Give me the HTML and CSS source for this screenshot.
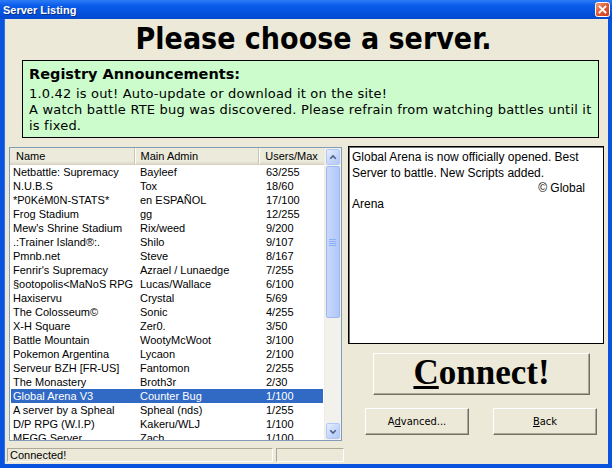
FILE: index.html
```html
<!DOCTYPE html>
<html>
<head>
<meta charset="utf-8">
<link rel="stylesheet" href="styles.css">
</head>
<body>
<div class="window">
  <div class="titlebar">
    <span class="title">Server Listing</span>
    <svg class="close" width="15" height="15" viewBox="0 0 15 15">
      <defs>
        <linearGradient id="cg" x1="0" y1="0" x2="1" y2="1">
          <stop offset="0" stop-color="#F0A080"/>
          <stop offset="0.5" stop-color="#DE5A32"/>
          <stop offset="1" stop-color="#C8401E"/>
        </linearGradient>
      </defs>
      <rect x="0.5" y="0.5" width="14" height="14" rx="2" fill="url(#cg)" stroke="#fff"/>
      <path d="M4.5 4.5 L10.5 10.5 M10.5 4.5 L4.5 10.5" stroke="#fff" stroke-width="1.8" stroke-linecap="square"/>
    </svg>
  </div>
  <div class="client">
    <h1 class="heading">Please choose a server.</h1>
    <div class="announce">
      <div class="announce-title">Registry Announcements:</div>
      <div class="announce-line">1.0.42 is out! Auto-update or download it on the site!</div>
      <div class="announce-line">A watch battle RTE bug was discovered. Please refrain from watching battles until it</div>
      <div class="announce-line">is fixed.</div>
    </div>
    <div class="main">
      <div class="listview">
        <div class="list-body">
          <div class="list-header">
            <div class="hcell c1">Name</div>
            <div class="hcell c2">Main Admin</div>
            <div class="hcell c3">Users/Max</div>
          </div>
          <div class="rows">
            <div class="row"><span class="c1">Netbattle: Supremacy</span><span class="c2">Bayleef</span><span class="c3">63/255</span></div>
            <div class="row"><span class="c1">N.U.B.S</span><span class="c2">Tox</span><span class="c3">18/60</span></div>
            <div class="row"><span class="c1">*P0KéM0N-STATS*</span><span class="c2">en ESPAÑOL</span><span class="c3">17/100</span></div>
            <div class="row"><span class="c1">Frog Stadium</span><span class="c2">gg</span><span class="c3">12/255</span></div>
            <div class="row"><span class="c1">Mew's Shrine Stadium</span><span class="c2">Rix/weed</span><span class="c3">9/200</span></div>
            <div class="row"><span class="c1">.:Trainer Island®:.</span><span class="c2">Shilo</span><span class="c3">9/107</span></div>
            <div class="row"><span class="c1">Pmnb.net</span><span class="c2">Steve</span><span class="c3">8/167</span></div>
            <div class="row"><span class="c1">Fenrir's Supremacy</span><span class="c2">Azrael / Lunaedge</span><span class="c3">7/255</span></div>
            <div class="row"><span class="c1">§ootopolis&lt;MaNoS RPG</span><span class="c2">Lucas/Wallace</span><span class="c3">6/100</span></div>
            <div class="row"><span class="c1">Haxiservu</span><span class="c2">Crystal</span><span class="c3">5/69</span></div>
            <div class="row"><span class="c1">The Colosseum©</span><span class="c2">Sonic</span><span class="c3">4/255</span></div>
            <div class="row"><span class="c1">X-H Square</span><span class="c2">Zer0.</span><span class="c3">3/50</span></div>
            <div class="row"><span class="c1">Battle Mountain</span><span class="c2">WootyMcWoot</span><span class="c3">3/100</span></div>
            <div class="row"><span class="c1">Pokemon Argentina</span><span class="c2">Lycaon</span><span class="c3">2/100</span></div>
            <div class="row"><span class="c1">Serveur BZH [FR-US]</span><span class="c2">Fantomon</span><span class="c3">2/255</span></div>
            <div class="row"><span class="c1">The Monastery</span><span class="c2">Broth3r</span><span class="c3">2/30</span></div>
            <div class="row selected"><span class="c1">Global Arena V3</span><span class="c2">Counter Bug</span><span class="c3">1/100</span></div>
            <div class="row"><span class="c1">A server by a Spheal</span><span class="c2">Spheal (nds)</span><span class="c3">1/255</span></div>
            <div class="row"><span class="c1">D/P RPG (W.I.P)</span><span class="c2">Kakeru/WLJ</span><span class="c3">1/100</span></div>
            <div class="row"><span class="c1">MEGG Server</span><span class="c2">Zach</span><span class="c3">1/100</span></div>
          </div>
        </div>
        <div class="scrollbar">
          <div class="sb-btn">
            <svg width="15" height="15" viewBox="0 0 15 15"><path d="M4 9 L7.5 5.5 L11 9" fill="none" stroke="#4D6185" stroke-width="2"/></svg>
          </div>
          <div class="sb-thumb">
            <svg width="8" height="8" viewBox="0 0 8 8"><path d="M0 1.5H7M0 3.5H7M0 5.5H7M0 7.5H7" stroke="#8CB0F8" stroke-width="1"/></svg>
          </div>
          <div class="sb-track"></div>
          <div class="sb-btn">
            <svg width="15" height="15" viewBox="0 0 15 15"><path d="M4 6 L7.5 9.5 L11 6" fill="none" stroke="#4D6185" stroke-width="2"/></svg>
          </div>
        </div>
      </div>
      <div class="side">
        <div class="desc">
          <div>Global Arena is now officially opened. Best Server to battle. New Scripts added.</div>
          <div class="desc-sign">© Global</div>
          <div>Arena</div>
        </div>
        <div class="connect-wrap">
          <div class="btn connect"><span class="u">C</span>onnect!</div>
        </div>
        <div class="btn-row">
          <div class="btn small">A<span class="u">d</span>vanced...</div>
          <div class="btn small"><span class="u">B</span>ack</div>
        </div>
      </div>
    </div>
    <div class="statusbar">
      <div class="panel p1">Connected!</div>
      <div class="panel p2"></div>
    </div>
  </div>
</div>
</body>
</html>
```

FILE: styles.css
```css
* { box-sizing: border-box; }
html, body { margin: 0; padding: 0; }
body { width: 612px; height: 468px; overflow: hidden; background: #ECE9D8; }

.window {
  width: 612px;
  height: 468px;
  display: flex;
  flex-direction: column;
  background: #0A53DE;
}

.titlebar {
  height: 19px;
  display: flex;
  align-items: center;
  justify-content: space-between;
  padding: 0 2px 0 3px;
  background: linear-gradient(#2C7CF6 0%, #0A5CEA 30%, #0451DC 70%, #0448CF 100%);
}
.title {
  color: #fff;
  font-family: "Liberation Sans", Arial, sans-serif;
  font-weight: bold;
  font-size: 11px;
  text-shadow: 1px 1px 0 #0A2F8A;
}
.close { display: block; }

.client {
  flex: 1;
  margin: 0 4px 4px 4px;
  background: #ECE9D8;
  display: flex;
  flex-direction: column;
  min-height: 0;
  border-left: 1px solid #2F6FE8;
}

.heading {
  margin: 0;
  height: 40px;
  line-height: 40px;
  text-align: center;
  padding-left: 14px;
  font-family: "DejaVu Sans Condensed", "DejaVu Sans", sans-serif;
  font-stretch: condensed;
  font-weight: bold;
  font-size: 30px;
  color: #000;
}

.announce {
  margin: 1px 9px 0 17px;
  height: 78px;
  background: #CCFCCC;
  border: 1px solid #000;
  padding: 4px 6px 3px 6px;
  font-family: "DejaVu Sans", sans-serif;
  color: #000;
}
.announce-title {
  font-weight: bold;
  font-size: 14.5px;
  line-height: 18px;
  margin-bottom: 3px;
}
.announce-line {
  font-size: 13px;
  line-height: 16px;
  letter-spacing: 0.2px;
  white-space: nowrap;
}

.main {
  display: flex;
  margin-top: 8px;
}

.listview {
  margin: 1px 0 0 4px;
  width: 333px;
  height: 294px;
  border: 1px solid #7F9DB9;
  background: #fff;
  display: flex;
  overflow: hidden;
}
.list-body {
  flex: 1;
  min-width: 0;
  overflow: hidden;
}
.list-header {
  display: flex;
  height: 17px;
  background: #EBEADB;
  border-bottom: 1px solid #D6D2C2;
  box-shadow: inset 0 -2px 0 #E2DECD;
  font-family: "Liberation Sans", Arial, sans-serif;
  font-size: 11px;
  color: #000;
}
.hcell {
  line-height: 16px;
  border-right: 1px solid #C7C5B2;
  box-shadow: 1px 0 0 #fff;
  white-space: nowrap;
  overflow: hidden;
}
.list-header .c1 { width: 125px; padding-left: 6px; }
.list-header .c2 { width: 125px; padding-left: 6px; }
.list-header .c3 { width: 65px; padding-left: 6px; border-right: none; box-shadow: none; }

.rows {
  font-family: "Liberation Sans", Arial, sans-serif;
  font-size: 11px;
  color: #000;
}
.row {
  display: flex;
  height: 14px;
  line-height: 14px;
  white-space: nowrap;
}
.row span { overflow: hidden; }
.row .c1 { width: 125px; padding-left: 3px; }
.row .c2 { width: 125px; padding-left: 5px; }
.row .c3 { width: 63px; padding-left: 6px; }
.row.selected { background: #316AC5; color: #fff; margin-left: 1px; margin-right: 1px; }
.row.selected .c1 { width: 124px; padding-left: 2px; }

.scrollbar {
  width: 17px;
  display: flex;
  flex-direction: column;
  background: #F3F1EC;
  border-left: 1px solid #EEEDE5;
}
.sb-btn {
  height: 16px;
  margin: 1px 1px 0 1px;
  border: 1px solid #B1C8F6;
  border-radius: 2px;
  background: linear-gradient(135deg, #E6EEFE 0%, #C4D5FC 60%, #B4C8F6 100%);
  display: flex;
  align-items: center;
  justify-content: center;
}
.sb-btn svg { display: block; }
.sb-thumb {
  height: 152px;
  margin: 1px 1px 0 1px;
  border: 1px solid #9DB7F1;
  border-radius: 2px;
  background: linear-gradient(90deg, #C9D8FC 0%, #BCD0FB 50%, #B1C7F8 100%);
  display: flex;
  align-items: center;
  justify-content: center;
}
.sb-track { flex: 1; }
.scrollbar .sb-btn:last-child { margin-bottom: 1px; }

.side {
  margin-left: 6px;
  width: 256px;
  display: flex;
  flex-direction: column;
}
.desc {
  height: 198px;
  background: #fff;
  border: 1px solid #000;
  box-shadow: inset 1px 1px 0 #6F6F6F;
  padding: 3px 14px 2px 3px;
  font-family: "Liberation Sans", Arial, sans-serif;
  font-size: 12px;
  line-height: 15.5px;
  color: #000;
}
.desc-sign { text-align: right; padding-right: 4px; }

.btn {
  background: #ECE9D8;
  border: 1px solid;
  border-color: #FFFFFF #716F64 #716F64 #FFFFFF;
  box-shadow: inset -1px -1px 0 #ACA899;
  display: flex;
  align-items: center;
  justify-content: center;
  color: #000;
}
.u { text-decoration: underline; }

.connect-wrap {
  margin-top: 9px;
  padding-left: 25px;
}
.connect {
  width: 217px;
  height: 42px;
  font-family: "Liberation Serif", "Times New Roman", serif;
  font-weight: bold;
  font-size: 35px;
  padding-bottom: 2px;
}

.btn-row {
  margin-top: 13px;
  padding-left: 17px;
  display: flex;
  gap: 24px;
}
.small {
  width: 104px;
  height: 27px;
  font-family: "DejaVu Sans Condensed", "DejaVu Sans", sans-serif;
  font-stretch: condensed;
  font-size: 11px;
}

.statusbar {
  margin-top: auto;
  height: 19px;
  padding: 3px 0 2px 2px;
  display: flex;
  gap: 3px;
}
.panel {
  height: 14px;
  border: 1px solid;
  border-color: #ACA899 #FFFFFF #FFFFFF #ACA899;
  font-family: "Liberation Sans", Arial, sans-serif;
  font-size: 11px;
  line-height: 12px;
  padding-left: 2px;
  color: #000;
}
.p1 { width: 266px; }
.p2 { width: 68px; }
```
